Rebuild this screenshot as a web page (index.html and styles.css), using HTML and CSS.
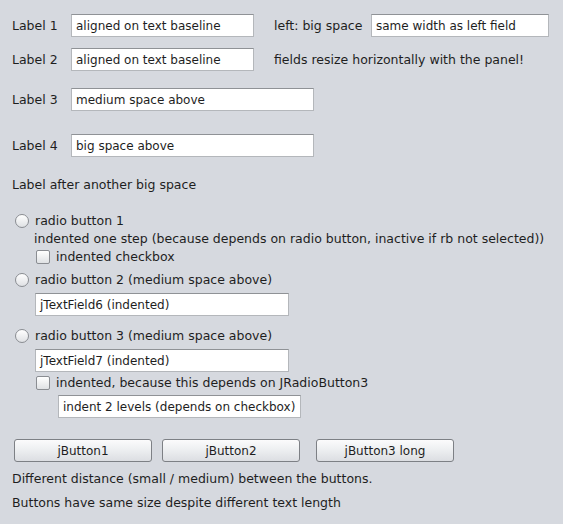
FILE: index.html
```html
<!DOCTYPE html>
<html>
<head>
<meta charset="utf-8">
<link rel="stylesheet" href="styles.css">
</head>
<body>
<div class="panel">
  <div class="row r1">
    <span class="lbl">Label 1</span>
    <div class="field w183">aligned on text baseline</div>
    <span class="note">left: big space</span>
    <div class="field w178">same width as left field</div>
  </div>
  <div class="row r2">
    <span class="lbl">Label 2</span>
    <div class="field w183">aligned on text baseline</div>
    <span class="note">fields resize horizontally with the panel!</span>
  </div>
  <div class="row r3">
    <span class="lbl">Label 3</span>
    <div class="field w243">medium space above</div>
  </div>
  <div class="row r4">
    <span class="lbl">Label 4</span>
    <div class="field w243">big space above</div>
  </div>
  <div class="line l-after">Label after another big space</div>

  <div class="line opt m-rb1"><span class="radio"></span>radio button 1</div>
  <div class="line ind1">indented one step (because depends on radio button, inactive if rb not selected))</div>
  <div class="line opt ind1b"><span class="check"></span>indented checkbox</div>
  <div class="line opt m-rb2"><span class="radio"></span>radio button 2 (medium space above)</div>
  <div class="field w254 indf m-f6">jTextField6 (indented)</div>
  <div class="line opt m-rb3"><span class="radio"></span>radio button 3 (medium space above)</div>
  <div class="field w254 indf m-f7">jTextField7 (indented)</div>
  <div class="line opt ind1b m-cb2"><span class="check"></span>indented, because this depends on JRadioButton3</div>
  <div class="field w243 indf2 m-f8">indent 2 levels (depends on checkbox)</div>

  <div class="buttons">
    <button class="btn">jButton1</button>
    <button class="btn b2">jButton2</button>
    <button class="btn b3">jButton3 long</button>
  </div>
  <div class="line txt m-t1">Different distance (small / medium) between the buttons.</div>
  <div class="line txt m-t2">Buttons have same size despite different text length</div>
</div>
</body>
</html>
```

FILE: styles.css
```css
html, body {
  margin: 0;
  padding: 0;
  background: #d6d9df;
}
body {
  font-family: "DejaVu Sans", "Liberation Sans", sans-serif;
  font-size: 12.5px;
  color: #1e1e1e;
  width: 563px;
  height: 524px;
  overflow: hidden;
}
.panel {
  padding: 14px 0 0 12px;
  display: flex;
  flex-direction: column;
  align-items: flex-start;
}
.row {
  display: flex;
  align-items: baseline;
  height: 23px;
}
.r2 { margin-top: 11px; }
.r3 { margin-top: 17px; }
.r4 { margin-top: 23px; }
.lbl {
  width: 59px;
  flex: none;
}
.note {
  margin-left: 20px;
  width: 97px;
  white-space: nowrap;
}
.field {
  box-sizing: border-box;
  height: 23px;
  font-size: 12px;
  line-height: 19px;
  padding-top: 2px;
  background: #ffffff;
  border: 1px solid #b4b7bb;
  border-top-color: #8f9296;
  padding-left: 4px;
  white-space: nowrap;
  flex: none;
  overflow: hidden;
}
.w183 { width: 183px; }
.w178 { width: 178px; }
.w243 { width: 243px; }
.w254 { width: 254px; }
.line {
  height: 18px;
  line-height: 18px;
  white-space: nowrap;
}
.l-after { margin-top: 19px; }
.opt {
  display: flex;
  align-items: center;
}
.radio {
  box-sizing: border-box;
  width: 14px;
  height: 14px;
  border-radius: 50%;
  border: 1px solid #8a8d92;
  background: linear-gradient(#ffffff, #dfe1e4);
  margin: 0 6px 0 3px;
  flex: none;
}
.check {
  box-sizing: border-box;
  width: 14px;
  height: 14px;
  border-radius: 2px;
  border: 1px solid #8a8d92;
  background: linear-gradient(#ffffff, #dfe1e4);
  margin-right: 6px;
  flex: none;
}
.m-rb1 { margin-top: 18px; }
.ind1 { margin-left: 22px; }
.ind1b { margin-left: 24px; }
.m-rb2 { margin-top: 5px; }
.indf { margin-left: 23px; }
.m-f6 { margin-top: 4px; }
.m-rb3 { margin-top: 11px; }
.m-f7 { margin-top: 4px; }
.m-cb2 { margin-top: 2px; }
.indf2 { margin-left: 46px; }
.m-f8 { margin-top: 3px; }
.buttons {
  display: flex;
  margin-top: 21px;
  margin-left: 2px;
}
.btn {
  box-sizing: border-box;
  width: 138px;
  height: 23px;
  font: inherit;
  font-size: 12px;
  color: #1e1e1e;
  border: 1px solid #7d8085;
  border-radius: 3px;
  background: linear-gradient(#fbfbfc, #eceef0 50%, #dcdee2);
  padding: 0;
}
.b2 { margin-left: 10px; }
.b3 { margin-left: 16px; }
.m-t1 { margin-top: 8px; }
.m-t2 { margin-top: 6px; }
```
